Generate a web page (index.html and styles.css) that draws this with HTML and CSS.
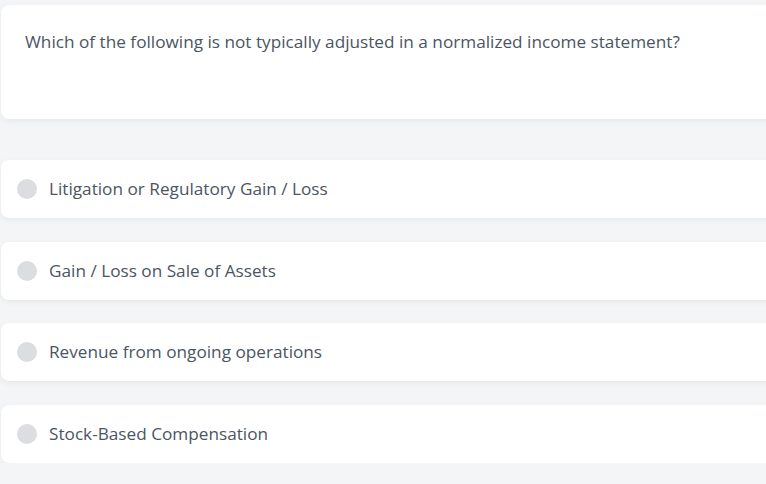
FILE: index.html
```html
<!DOCTYPE html>
<html>
<head>
<meta charset="utf-8">
<link rel="stylesheet" href="styles.css">
</head>
<body>
<div class="page">
  <div class="question card">
    <p class="q-text">Which of the following is not typically adjusted in a normalized income statement?</p>
  </div>
  <div class="options">
    <div class="option card"><span class="radio"></span><span class="label">Litigation or Regulatory Gain / Loss</span></div>
    <div class="option card"><span class="radio"></span><span class="label">Gain / Loss on Sale of Assets</span></div>
    <div class="option card"><span class="radio"></span><span class="label">Revenue from ongoing operations</span></div>
    <div class="option card"><span class="radio"></span><span class="label">Stock-Based Compensation</span></div>
  </div>
</div>
</body>
</html>
```
FILE: styles.css
```css
html, body {
  margin: 0;
  padding: 0;
  background: #f4f5f7;
  overflow: hidden;
}
body {
  font-family: "Open Sans", "Noto Sans", sans-serif;
  color: #4b5563;
}
.page {
  padding: 5px 0 0 1px;
  width: 790px;
}
.card {
  background: #ffffff;
  border-radius: 8px;
  box-shadow: 0 2px 6px rgba(0, 0, 0, 0.06);
}
.question {
  height: 114px;
  box-sizing: border-box;
  padding: 27px 24px 0 24px;
}
.q-text {
  margin: 0;
  font-size: 17.2px;
  line-height: 20px;
}
.options {
  margin-top: 41px;
  display: flex;
  flex-direction: column;
  gap: 23.67px;
}
.option {
  height: 58px;
  display: flex;
  align-items: center;
  padding-left: 16px;
  gap: 12px;
}
.radio {
  width: 20px;
  height: 20px;
  border-radius: 50%;
  background: #dcdde0;
  flex: none;
}
.label {
  font-size: 17.2px;
  line-height: 20px;
}
```
